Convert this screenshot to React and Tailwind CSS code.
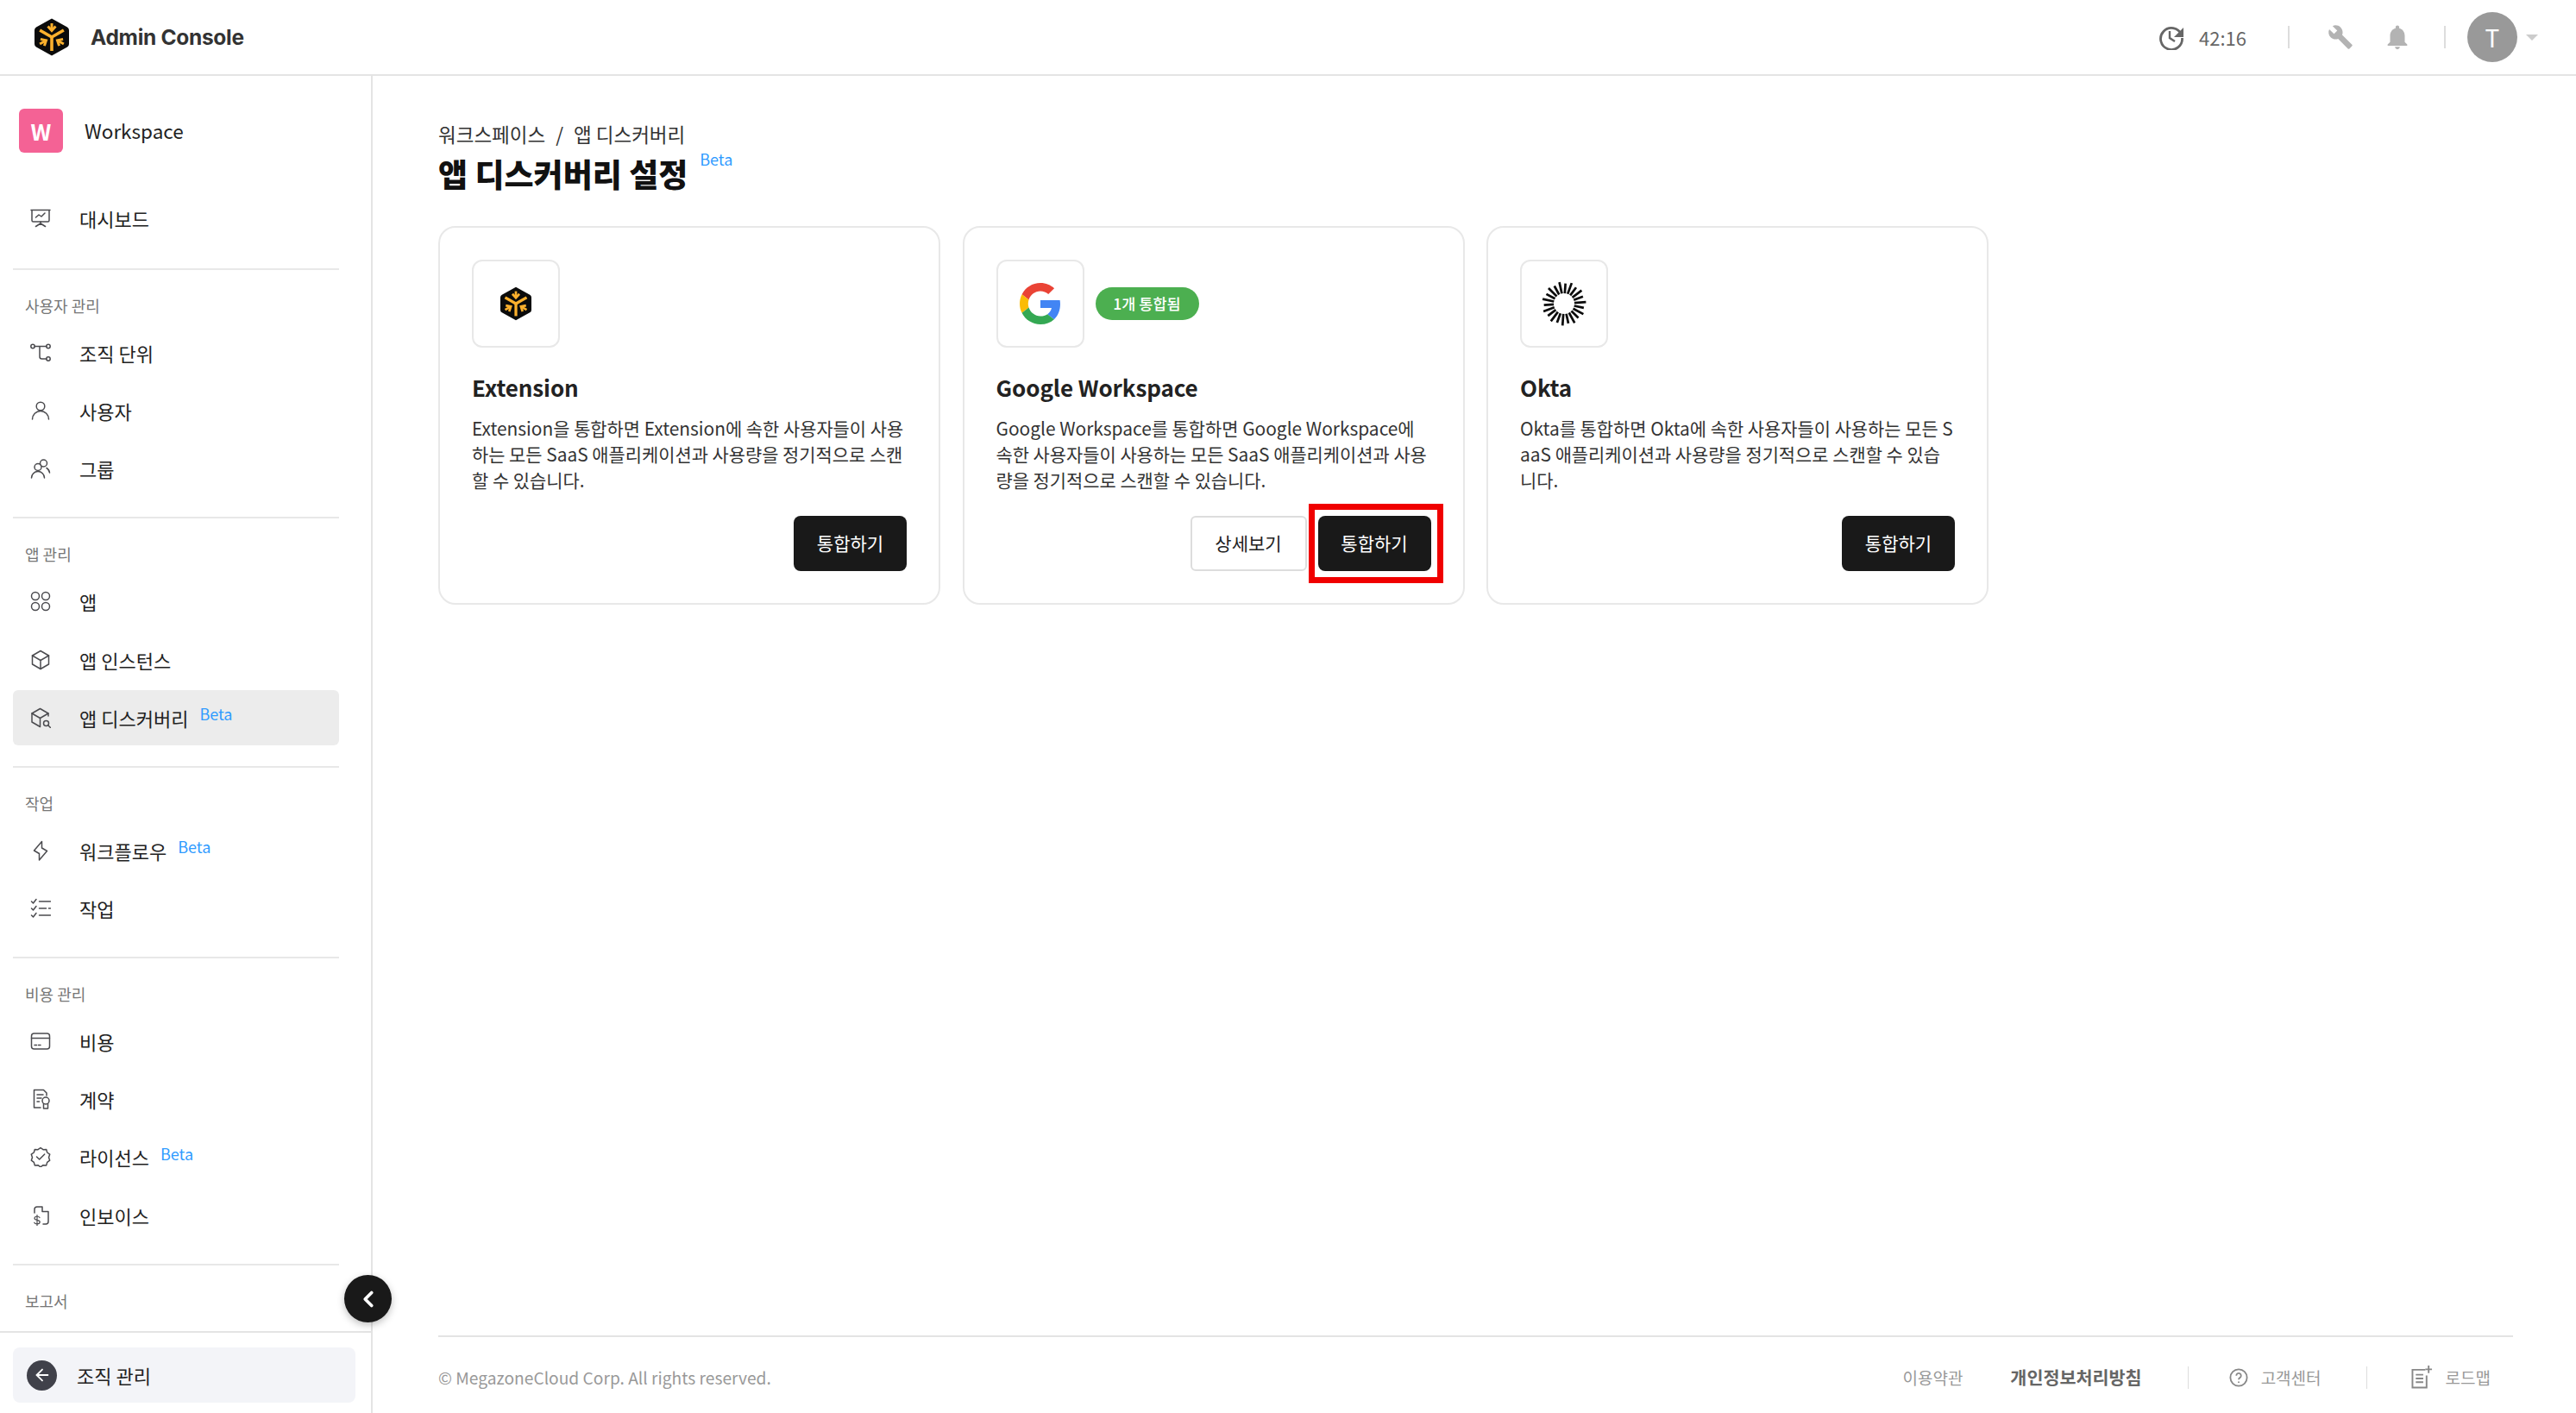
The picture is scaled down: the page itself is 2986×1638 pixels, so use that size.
import { ArrowLeft, ChevronLeft } from 'lucide-react';

const KR = "font-['Noto_Sans_CJK_KR','Noto_Sans',sans-serif]";

function Logo({ className }) {
  const arrow = (
    <g fill="none" stroke="#fbb02d" strokeWidth="3">
      <path d="M20 6v8" />
      <path d="M15.500 9.500l4.500 5 4.500-5" />
      <path d="M20 22v16" strokeWidth="3.600" />
    </g>
  );
  return (
    <svg viewBox="0 0 40 44" className={className}>
      <path d="M20 0.500L38 10.500Q40 11.500 40 14V30Q40 32.500 38 33.500L20 43.500L2 33.500Q0 32.500 0 30V14Q0 11.500 2 10.500Z" fill="#0b0b0b" />
      {arrow}
      <g transform="rotate(120 20 22)">{arrow}</g>
      <g transform="rotate(240 20 22)">{arrow}</g>
    </svg>
  );
}

function GoogleIcon() {
  return (
    <svg viewBox="0 0 48 48" className="w-[48px] h-[48px]">
      <path fill="#EA4335" d="M24 9.500c3.540 0 6.710 1.220 9.210 3.600l6.850-6.850C35.900 2.380 30.470 0 24 0 14.620 0 6.510 5.380 2.560 13.220l7.980 6.190C12.430 13.720 17.740 9.500 24 9.500z" />
      <path fill="#4285F4" d="M46.980 24.550c0-1.570-.150-3.090-.380-4.550H24v9.020h12.940c-.580 2.960-2.260 5.480-4.780 7.180l7.730 6c4.510-4.180 7.090-10.360 7.090-17.650z" />
      <path fill="#FBBC05" d="M10.530 28.590c-.480-1.450-.760-2.990-.760-4.590s.270-3.140.760-4.590l-7.980-6.190C.920 16.460 0 20.120 0 24c0 3.880.920 7.540 2.560 10.780l7.970-6.190z" />
      <path fill="#34A853" d="M24 48c6.480 0 11.930-2.130 15.890-5.810l-7.730-6c-2.150 1.450-4.920 2.300-8.160 2.300-6.260 0-11.570-4.220-13.470-9.910l-7.980 6.190C6.510 42.620 14.620 48 24 48z" />
    </svg>
  );
}

function OktaIcon() {
  const rays = [];
  for (let i = 0; i < 22; i++) {
    rays.push(<line key={i} x1="25" y1={i % 2 ? 0.5 : 2.5} x2="25" y2="13.500" transform={`rotate(${i * (360 / 22) + 4} 25 25)`} />);
  }
  return (
    <svg viewBox="0 0 50 50" className="w-[52px] h-[52px]" stroke="#0b0b0b" strokeWidth="2.600">
      {rays}
    </svg>
  );
}

const ic = { fill: 'none', stroke: '#4b4b4f', strokeWidth: 1.5, strokeLinecap: 'round', strokeLinejoin: 'round', viewBox: '0 0 24 24', className: 'w-[24px] h-[24px]' };

const icons = {
  dash: <svg {...ic}><path d="M1 2.500h22M2 2.500v12a1.500 1.500 0 0 0 1.500 1.500h17a1.500 1.500 0 0 0 1.500-1.500v-12" /><path d="M6.500 11l3.500-3 3 2 4-4M12 16v2M6.500 21.500l5.500-3.500 5.500 3.500" /></svg>,
  org: <svg {...ic}><circle cx="3" cy="4.500" r="2.200" /><circle cx="21" cy="4.500" r="2.200" /><circle cx="21" cy="19" r="2.200" /><path d="M5.200 4.500h13.600M11 4.500v12a2.500 2.500 0 0 0 2.500 2.500h5.300" /></svg>,
  user: <svg {...ic}><circle cx="12" cy="7" r="4.800" /><path d="M2.500 22a9.500 9.500 0 0 1 19 0" /></svg>,
  group: <svg {...ic}><circle cx="15.500" cy="6" r="4" /><path d="M19 11.500a7.500 7.500 0 0 1 3.500 5.500" /><circle cx="9" cy="10.500" r="4" /><path d="M1.500 23a7.500 7.500 0 0 1 15 0" /></svg>,
  apps: <svg {...ic}><rect x="1.500" y="1.500" width="9" height="9" rx="4.500" /><rect x="13.500" y="1.500" width="9" height="9" rx="4.500" /><rect x="1.500" y="13.500" width="9" height="9" rx="4.500" /><rect x="13.500" y="13.500" width="9" height="9" rx="4.500" /></svg>,
  box: <svg {...ic}><path d="M12 1.500l9.500 5.500v10L12 22.500 2.500 17V7z" /><path d="M2.500 7L12 12.500 21.500 7M12 12.500v10" /></svg>,
  boxSearch: <svg {...ic}><path d="M21 10V7l-9.500-5.500L2 7v10l9.500 5.500" /><path d="M2 7l9.500 5.500L21 7M11.500 12.500v9.500" /><circle cx="18.500" cy="18.500" r="3" /><path d="M21 21l2.500 2.500" /></svg>,
  flash: <svg {...ic}><path d="M13.500 1.500v7.500l6 3.500-9 10.500v-7.500l-6-3.500z" /></svg>,
  tasks: <svg {...ic}><path d="M1.500 4l2 2 3.500-4.500M1.500 12l2 2 3.500-4.500M1.500 20l2 2 3.500-4.500" /><path d="M10.500 4h13M10.500 12h8M21.500 12h2M10.500 20h13" /></svg>,
  card: <svg {...ic}><rect x="1.500" y="3" width="21" height="18" rx="3" /><path d="M1.500 8.500h21M5 16.500h2.500M9.500 16.500h2.500" /></svg>,
  contract: <svg {...ic}><path d="M12 22H4.500V1.500h11l3.500 3.500v3" /><path d="M8 7h7M8 11h5M8 15h2.500" /><circle cx="18" cy="14" r="4" /><path d="M15.500 17.500v5.500h5v-5.500" /></svg>,
  license: <svg {...ic}><path d="M12 1.500l3 2.200 3.700-.200 1 3.500 3 2.200-1.200 3.500 1.200 3.500-3 2.200-1 3.500-3.700-.200-3 2.200-3-2.200-3.700.200-1-3.500-3-2.200 1.200-3.500L1.300 9.200l3-2.200 1-3.500 3.700.200z" /><path d="M7.500 12l3.200 3 6-6" /></svg>,
  invoice: <svg {...ic}><path d="M5 9V5a3 3 0 0 1 3-3h6v5.500h7V19a3 3 0 0 1-3 3h-3" /><path d="M11 14.500c-.600-1-1.500-1.500-3-1.500-1.800 0-3 .900-3 2.200 0 3 6.200 1.400 6.200 4.400 0 1.400-1.300 2.400-3.200 2.400-1.600 0-2.700-.600-3.300-1.700M8 11.500V24" strokeWidth="1.200" /></svg>,
};

const BETA = "text-[18px] leading-none text-[#2f9bff] font-['Noto_Sans_CJK_KR',sans-serif]";

function NavRow({ icon, label, beta, active }) {
  return (
    <div className={`h-[64px] flex items-center rounded-[6px] ${active ? 'bg-[#ececec]' : ''}`}>
      <span className="w-[78px] pl-[20px] flex-none flex">{icons[icon]}</span>
      <span className="-ml-[1px] text-[22px] leading-[32px] text-[#222]">{label}</span>
      {beta && <span className={`${BETA} ml-[13px] -mt-[9px]`}>Beta</span>}
    </div>
  );
}

function NavSection({ label, items }) {
  return (
    <div className="border-t-2 border-[#e8e8e8] pt-[28px] pb-[24px]">
      <div className="pl-[14px] text-[18px] leading-[26px] text-[#777] mb-[10px]">{label}</div>
      {items && (
        <div className="flex flex-col gap-[3.2px]">
          {items.map((it) => (
            <NavRow key={it.label} {...it} />
          ))}
        </div>
      )}
    </div>
  );
}

function Sidebar() {
  return (
    <aside className="relative w-[432px] flex-none flex flex-col border-r-2 border-[#e4e4e4]">
      <div className="flex-1 overflow-hidden pl-[15px] pr-[37px]">
        <div className="flex items-center h-[51px] mt-[38px] pl-[7px]">
          <div className="w-[51px] h-[51px] rounded-[6px] bg-[#f46295] flex items-center justify-center text-white font-bold text-[26px]">W</div>
          <span className="ml-[25px] text-[22.500px] text-[#222]">Workspace</span>
        </div>
        <div className="mt-[44px] mb-[26px]">
          <NavRow icon="dash" label="대시보드" />
        </div>
        <NavSection
          label="사용자 관리"
          items={[
            { icon: 'org', label: '조직 단위' },
            { icon: 'user', label: '사용자' },
            { icon: 'group', label: '그룹' },
          ]}
        />
        <NavSection
          label="앱 관리"
          items={[
            { icon: 'apps', label: '앱' },
            { icon: 'box', label: '앱 인스턴스' },
            { icon: 'boxSearch', label: '앱 디스커버리', beta: true, active: true },
          ]}
        />
        <NavSection
          label="작업"
          items={[
            { icon: 'flash', label: '워크플로우', beta: true },
            { icon: 'tasks', label: '작업' },
          ]}
        />
        <NavSection
          label="비용 관리"
          items={[
            { icon: 'card', label: '비용' },
            { icon: 'contract', label: '계약' },
            { icon: 'license', label: '라이선스', beta: true },
            { icon: 'invoice', label: '인보이스' },
          ]}
        />
        <NavSection label="보고서" />
      </div>
      <div className="h-[95px] flex-none border-t-2 border-[#e4e4e4] pt-[17px] pl-[15px] pr-[18px]">
        <div className="h-[64px] rounded-[8px] bg-[#f3f4f8] flex items-center pl-[16px]">
          <span className="w-[35px] h-[35px] rounded-full bg-[#40414a] flex items-center justify-center">
            <ArrowLeft size={22} color="#fff" strokeWidth={2} />
          </span>
          <span className="ml-[23px] text-[22px] text-[#222]">조직 관리</span>
        </div>
      </div>
      <button className="absolute left-[399px] top-[1390px] w-[55px] h-[55px] rounded-full bg-[#191919] flex items-center justify-center shadow-[0_3px_8px_rgba(0,0,0,0.25)]">
        <ChevronLeft size={30} color="#fff" strokeWidth={3} />
      </button>
    </aside>
  );
}

function Header() {
  return (
    <header className="h-[88px] flex-none flex items-center border-b-2 border-[#e4e4e4] pl-[40px] pr-[44px]">
      <Logo className="w-[40px] h-[44px]" />
      <span className="ml-[25px] font-['Inter',sans-serif] font-bold text-[24.500px] text-[#333] tracking-[-0.3px]">Admin Console</span>
      <div className="ml-auto flex items-center">
        <svg viewBox="0 0 30 30" className="w-[30px] h-[30px]" fill="none" stroke="#666" strokeWidth="2.800">
          <path d="M26.500 12A12.500 12.500 0 1 0 27.500 16" />
          <path d="M29 4v11H18z" fill="#666" stroke="none" />
          <path d="M13 8v8l6 4" strokeWidth="2.400" />
        </svg>
        <span className="ml-[17px] w-[52px] text-[22px] text-[#666]">42:16</span>
        <span className="ml-[51px] w-[2px] h-[26px] bg-[#ddd]" />
        <svg viewBox="0 0 24 24" className="ml-[44px] w-[30px] h-[30px]" fill="#b3b3b3">
          <path d="M22.700 19l-9.100-9.100c.900-2.300.400-5-1.500-6.900-2-2-5-2.400-7.400-1.300L9 6 6 9 1.600 4.700C.400 7.100.900 10.100 2.900 12.100c1.900 1.900 4.600 2.400 6.900 1.500l9.100 9.100c.400.400 1 .400 1.400 0l2.300-2.300c.500-.400.500-1.100.100-1.400z" />
        </svg>
        <svg viewBox="0 0 24 24" className="ml-[34px] w-[34px] h-[34px]" fill="#b3b3b3">
          <path d="M12 22c1.100 0 2-.900 2-2h-4c0 1.100.900 2 2 2zm6-6v-5c0-3.070-1.630-5.640-4.500-6.320V4c0-.830-.670-1.500-1.500-1.500s-1.500.670-1.500 1.500v.680C7.640 5.360 6 7.920 6 11v5l-2 2v1h16v-1l-2-2z" />
        </svg>
        <span className="ml-[37px] w-[2px] h-[26px] bg-[#ddd]" />
        <span className="ml-[25px] w-[58px] h-[58px] rounded-full bg-[#999] flex items-center justify-center text-white text-[28px]">T</span>
        <span className="ml-[10px] w-0 h-0 border-l-[7px] border-r-[7px] border-t-[7px] border-l-transparent border-r-transparent border-t-[#ccc]" />
      </div>
    </header>
  );
}

function Card({ name, icon, desc, badge, detail, highlight }) {
  return (
    <div className="w-[582px] h-[439px] border-2 border-[#e8e8e8] rounded-[20px] p-[37px] flex flex-col">
      <div className="flex items-center">
        <div className="w-[102px] h-[102px] border-2 border-[#e8e8e8] rounded-[12px] flex items-center justify-center">{icon}</div>
        {badge && (
          <span className="ml-[13px] h-[38px] w-[120px] rounded-full bg-[#4caf50] text-white text-[17.500px] font-medium flex items-center justify-center">{badge}</span>
        )}
      </div>
      <h3 className="mt-[27px] text-[26px] leading-[38px] font-bold text-[#222] tracking-[-0.1px]">{name}</h3>
      <p className="mt-[13px] text-[20.900px] leading-[30px] text-[#333] break-all">{desc}</p>
      <div className="mt-auto flex justify-end gap-[13px]">
        {detail && (
          <button className="w-[135px] h-[64px] rounded-[6px] border-2 border-[#ddd] bg-white text-[21px] text-[#222]">상세보기</button>
        )}
        <div className="relative">
          <button className="w-[131px] h-[64px] rounded-[8px] bg-[#191919] text-white text-[21px]">통합하기</button>
          {highlight && (
            <span className="absolute -left-[11px] -right-[14px] -top-[14px] -bottom-[14px] border-[7px] border-[#f00000]" />
          )}
        </div>
      </div>
    </div>
  );
}

function Footer() {
  return (
    <footer className="mt-auto h-[90px] flex-none border-t-2 border-[#e4e4e4] pt-[6px] flex items-center text-[#999]">
      <span className="text-[19.200px]">© MegazoneCloud Corp. All rights reserved.</span>
      <div className="ml-auto flex items-center pr-[26px]">
        <span className="text-[19px]">이용약관</span>
        <span className="ml-[55px] text-[20.700px] font-bold text-[#666]">개인정보처리방침</span>
        <span className="ml-[53px] w-[1px] h-[26px] bg-[#ddd]" />
        <svg viewBox="0 0 24 24" className="ml-[47px] w-[22px] h-[22px]" fill="none" stroke="#888" strokeWidth="2">
          <circle cx="12" cy="12" r="10.500" />
          <path d="M9 9.500a3 3 0 1 1 4.500 2.600c-1 .600-1.500 1.200-1.500 2.400M12 17v1.500" />
        </svg>
        <span className="ml-[15px] text-[19px]">고객센터</span>
        <span className="ml-[52px] w-[1px] h-[26px] bg-[#ddd]" />
        <svg viewBox="0 0 26 28" className="ml-[51px] w-[25px] h-[27px]" fill="none" stroke="#888" strokeWidth="2">
          <path d="M17 5H1.500v21.500h17V12" />
          <path d="M5.500 11h9M5.500 15.500h9M5.500 20h9M21 0v9M17 4.500h8" />
        </svg>
        <span className="ml-[15px] text-[19px]">로드맵</span>
      </div>
    </footer>
  );
}

export default function App() {
  return (
    <div className={`h-[1638px] flex flex-col overflow-hidden bg-white ${KR}`}>
      <Header />
      <div className="flex-1 flex min-h-0">
        <Sidebar />
        <main className="flex-1 flex flex-col pl-[76px] pr-[73px]">
          <div className="mt-[51px] text-[22.500px] leading-[32px] text-[#333] flex items-center">
            <span>워크스페이스</span>
            <span className="mx-[12px]">/</span>
            <span>앱 디스커버리</span>
          </div>
          <div className="flex items-start">
            <h1 className="text-[37px] leading-[60px] font-black text-[#111]">앱 디스커버리 설정</h1>
            <span className={`${BETA} ml-[14px] mt-[4px]`}>Beta</span>
          </div>
          <div className="mt-[31px] flex gap-[25.500px]">
            <Card
              name="Extension"
              icon={<Logo className="w-[36px] h-[40px]" />}
              desc="Extension을 통합하면 Extension에 속한 사용자들이 사용하는 모든 SaaS 애플리케이션과 사용량을 정기적으로 스캔할 수 있습니다."
            />
            <Card
              name="Google Workspace"
              icon={<GoogleIcon />}
              badge="1개 통합됨"
              detail
              highlight
              desc="Google Workspace를 통합하면 Google Workspace에 속한 사용자들이 사용하는 모든 SaaS 애플리케이션과 사용량을 정기적으로 스캔할 수 있습니다."
            />
            <Card
              name="Okta"
              icon={<OktaIcon />}
              desc="Okta를 통합하면 Okta에 속한 사용자들이 사용하는 모든 SaaS 애플리케이션과 사용량을 정기적으로 스캔할 수 있습니다."
            />
          </div>
          <Footer />
        </main>
      </div>
    </div>
  );
}
